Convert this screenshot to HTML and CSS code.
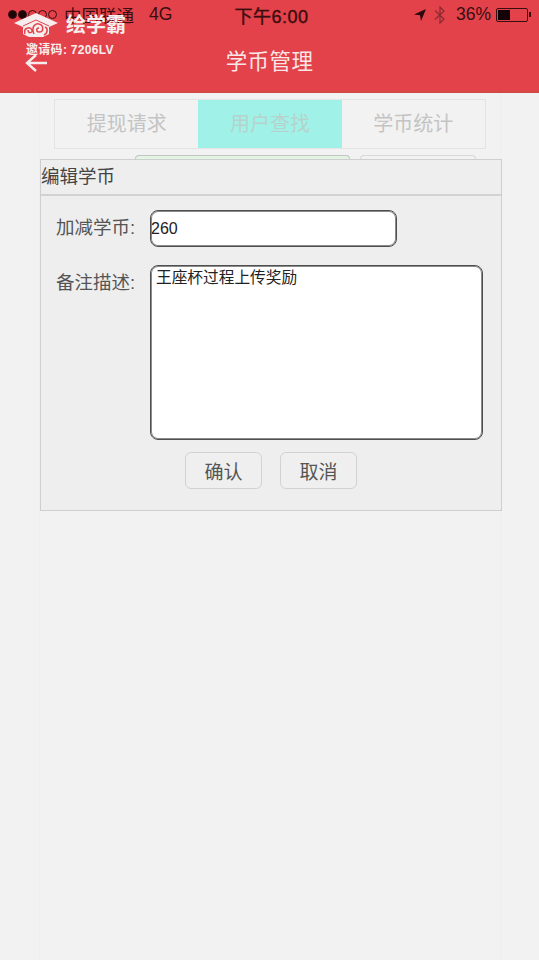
FILE: index.html
```html
<!DOCTYPE html>
<html lang="en">

<head>
  <meta charset="UTF-8" />
  <meta name="viewport" content="width=device-width, initial-scale=1.0" />
  <title>学币管理</title>
  <link rel="stylesheet" href="styles.css">
</head>

<body>
  <div class="page">
    <!-- Red header with status bar -->
    <header class="top-bar">
      <div class="status-bar">
        <div class="status-left">
          <span class="signal">
            <i class="dot on"></i><i class="dot on"></i><i class="dot"></i><i class="dot"></i><i class="dot"></i>
          </span>
          <span class="carrier">中国联通</span>
          <span class="network">4G</span>
        </div>
        <div class="status-time">下午6:00</div>
        <div class="status-right">
          <svg class="icon-location" width="14" height="14" viewBox="0 0 14 14">
            <path d="M13 1 L1 6.5 L7 7.2 L8 13 Z" fill="#2a0a0c" />
          </svg>
          <svg class="icon-bluetooth" width="12" height="20" viewBox="0 0 12 20">
            <path d="M1 5.5 L10 14 L6 18 V2 L10 6 L1 14.5" fill="none" stroke="#8a2a30" stroke-width="1.2" />
          </svg>
          <span class="battery-text">36%</span>
          <span class="battery"><span class="battery-fill"></span></span>
          <span class="battery-cap"></span>
        </div>
      </div>

      <div class="title-row">
        <svg class="icon-back" width="23" height="18" viewBox="0 0 23 18">
          <path d="M22 9 H2 M11 1 L2 9 L11 17" fill="none" stroke="#f7ecec" stroke-width="2.4" />
        </svg>
        <h1>学币管理</h1>
      </div>

      <!-- Watermark over the header -->
      <div class="brand">
        <div class="brand-row">
          <svg class="brand-logo" width="44" height="24" viewBox="0 0 44 24">
            <path d="M22 0 L44 10 L35 14 V21 L29 24 H15 L9 21 V14 L0 10 Z" fill="#f6eeee" />
            <path d="M9 13 L22 7 L35 13" fill="none" stroke="#e2434a" stroke-width="1" />
            <path d="M11 21 C9 15 16 13 18 17 C19 20 14 21 14 17 M20 21 C17 14 21 10 25 11 C30 12 30 19 25 19 C22 19 22 15 25 15 M30 22 C34 20 34 15 31 14" fill="none" stroke="#e2434a" stroke-width="1.5" />
          </svg>
          <span class="brand-name">绘学霸</span>
        </div>
        <div class="brand-code">邀请码: 7206LV</div>
      </div>
    </header>

    <main class="content">
      <div class="tabs">
        <div class="tab">提现请求</div>
        <div class="tab active">用户查找</div>
        <div class="tab">学币统计</div>
      </div>

      <!-- Buttons that the dialog covers, only their top edges show -->
      <div class="behind-row">
        <div class="behind-btn green"></div>
        <div class="behind-btn"></div>
      </div>

      <div class="dialog">
        <div class="dialog-title">编辑学币</div>
        <div class="dialog-body">
          <div class="form-group">
            <label for="coins">加减学币:</label>
            <input type="text" id="coins" class="coins-input" value="260" />
          </div>
          <div class="form-group">
            <label for="remark">备注描述:</label>
            <textarea id="remark" class="remark-input">王座杯过程上传奖励</textarea>
          </div>
          <div class="form-actions">
            <button>确认</button>
            <button>取消</button>
          </div>
        </div>
      </div>
    </main>
  </div>
</body>

</html>
```

FILE: styles.css
```css
* {
  box-sizing: border-box;
}

html,
body {
  margin: 0;
  height: 100%;
}

body {
  background-color: #f2f2f2;
  font-family: "Liberation Sans", "Noto Sans CJK SC", sans-serif;
  overflow: hidden;
}

.page {
  height: 960px;
  display: flex;
  flex-direction: column;
}

.top-bar {
  position: relative;
  height: 93px;
  padding: 0 8px;
  background-color: #e4424a;
  border-bottom: 2px solid #cf4a45;
}

.status-bar {
  height: 29px;
  display: grid;
  grid-template-columns: 1fr auto 1fr;
  align-items: center;
  color: #3a0d10;
  font-size: 17.5px;
}

.status-left,
.status-right {
  display: flex;
  align-items: center;
}

.signal {
  display: flex;
  gap: 1px;
  margin-right: 7px;
}

.dot {
  width: 9px;
  height: 9px;
  border: 1px solid #3a0d10;
  border-radius: 50%;
}

.dot.on {
  background-color: #1c0607;
}

.network {
  margin-left: 15px;
}

.status-time {
  margin-left: 4px;
  font-size: 18px;
  letter-spacing: 0.5px;
  -webkit-text-stroke: 0.4px #3a0d10;
}

.status-right {
  justify-content: flex-end;
}

.icon-bluetooth {
  margin-left: 7px;
}

.battery-text {
  margin-left: 10px;
}

.battery {
  width: 32px;
  height: 14px;
  margin-left: 5px;
  padding: 1px;
  border: 1px solid #3a0d10;
  border-radius: 2px;
}

.battery-fill {
  display: block;
  width: 12px;
  height: 100%;
  background-color: #14040a;
}

.battery-cap {
  width: 2px;
  height: 5px;
  margin-left: 1px;
  background-color: #3a0d10;
}

.title-row {
  height: 62px;
  display: flex;
  align-items: center;
  justify-content: center;
}

.title-row h1 {
  margin: 0 0 2px;
  color: #f9e6e6;
  font-size: 21.5px;
  font-weight: 400;
  letter-spacing: 0.4px;
}

.icon-back {
  position: absolute;
  left: 25px;
  top: 54px;
}

.brand {
  position: absolute;
  left: 14px;
  top: 13px;
  color: #f8eeee;
}

.brand-row {
  display: flex;
  align-items: center;
  gap: 8px;
}

.brand-name {
  font-size: 20px;
  line-height: 24px;
  font-weight: 700;
}

.brand-code {
  margin: 3px 0 0 12px;
  font-size: 12px;
  font-weight: 700;
  letter-spacing: 0.3px;
}

.content {
  flex: 1;
  width: 462px;
  margin-left: 39px;
  padding-top: 6px;
  border-left: 1px solid #eeeeee;
  border-right: 1px solid #eeeeee;
}

.tabs {
  display: flex;
  width: 432px;
  height: 50px;
  margin-left: 14px;
  border: 1px solid #e4e4e4;
}

.tab {
  flex: 1;
  display: flex;
  align-items: center;
  justify-content: center;
  padding-bottom: 4px;
  color: #c4c4c4;
  font-size: 20px;
}

.tab.active {
  background-color: #a0f2e9;
  color: #b6d2cc;
}

.behind-row {
  display: flex;
  gap: 10px;
  height: 4px;
  margin: 6px 0 0 95px;
}

.behind-btn {
  width: 116px;
  height: 4px;
  border: 1px solid #d8d8d8;
  border-bottom: none;
  border-radius: 4px 4px 0 0;
}

.behind-btn.green {
  width: 215px;
  background-color: #e4f4e4;
  border-color: #c4c4c4;
}

.dialog {
  width: 462px;
  height: 352px;
  background-color: #eeeeee;
  border: 1px solid #cfcfcf;
}

.dialog-title {
  height: 36px;
  line-height: 34px;
  color: #444444;
  font-size: 18.5px;
  border-bottom: 2px solid #d2d2d2;
}

.dialog-body {
  padding: 14px 18px 0 15px;
}

.form-group {
  display: flex;
  align-items: flex-start;
  gap: 14px;
  margin-bottom: 18px;
}

.form-group label {
  width: 80px;
  padding-top: 3px;
  color: #555555;
  font-size: 18.5px;
  white-space: nowrap;
}

.coins-input,
.remark-input {
  padding: 0;
  color: #222222;
  background-color: #ffffff;
  border: 1px solid #4f4f4f;
  border-radius: 8px;
  box-shadow: inset 0 0 0 1px #8a8a8a;
  font-family: inherit;
  outline: none;
}

.coins-input {
  width: 247px;
  height: 37px;
  font-size: 16px;
}

.remark-input {
  width: 333px;
  height: 175px;
  padding: 3px 5px;
  line-height: 18px;
  font-size: 15.7px;
  resize: none;
}

.form-actions {
  display: flex;
  justify-content: center;
  gap: 18px;
  margin: -6px 0 0 3px;
}

.form-actions button {
  width: 77px;
  height: 37px;
  padding: 0;
  color: #555555;
  background-color: #efefef;
  border: 1px solid #d2d2d2;
  border-radius: 6px;
  font-family: inherit;
  font-size: 19px;
}
```
